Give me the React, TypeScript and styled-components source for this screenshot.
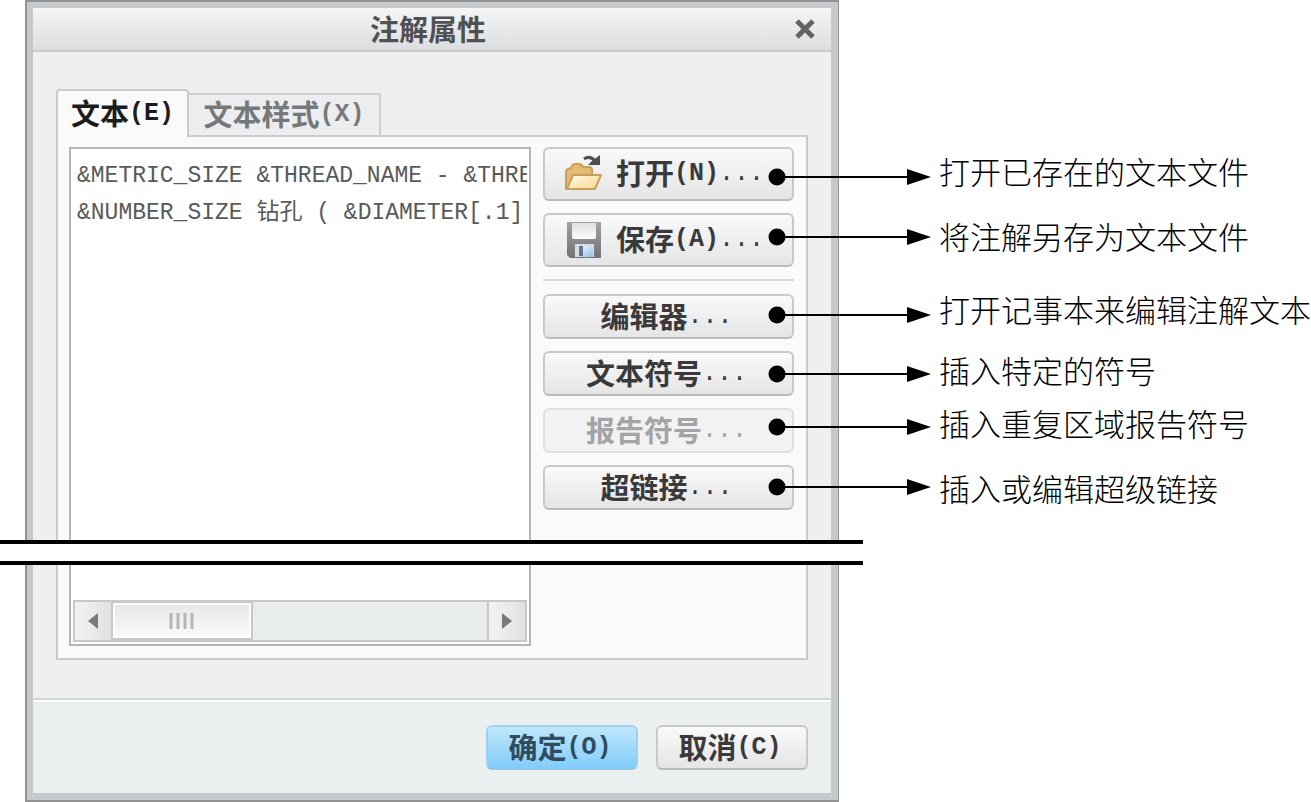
import React from 'react';
import styled, { createGlobalStyle, css } from 'styled-components';

const GlobalStyle = createGlobalStyle`
  * { box-sizing: border-box; }
  body {
    margin: 0;
    background: #fff;
    color: #3a3a3c;
    font-family: 'Noto Sans CJK SC', sans-serif;
  }
  button, textarea { font-family: inherit; color: inherit; margin: 0; }
`;

const Figure = styled.main`
  position: relative;
  display: grid;
  grid-template-columns: minmax(600px, 1fr) 472px;
  min-height: 100vh;
  padding-left: 25px;
  overflow: hidden;
`;

const Dialog = styled.section`
  display: flex;
  flex-direction: column;
  border: 2px solid #909294;
  border-right-width: 1px;
  background: #c5c9cb;
  padding: 6px 7px 7px 6px;
`;

const TitleBar = styled.header`
  display: grid;
  grid-template-columns: 36px 1fr 44px;
  align-items: center;
  height: 44px;
  border-bottom: 2px solid #c9cacb;
  background: linear-gradient(#f5f5f5, #dcdddf);
`;

const Title = styled.h1`
  grid-column: 2;
  margin: 0;
  padding-bottom: 2px;
  text-align: center;
  font-size: 29px;
  line-height: 40px;
  font-weight: 700;
  color: #505153;
`;

const CloseButton = styled.button`
  display: grid;
  place-items: center;
  width: 36px;
  height: 36px;
  padding: 0;
  border: 0;
  background: none;
`;

const Body = styled.div`
  flex: 1;
  display: flex;
  flex-direction: column;
  padding: 37px 23px 38px;
  background: #edeff1;
`;

const TabList = styled.div`
  display: flex;
  align-items: flex-end;
  height: 46px;
`;

const Tab = styled.button<{ $active?: boolean }>`
  display: flex;
  align-items: center;
  justify-content: center;
  padding: 0;
  font-size: 29px;
  font-weight: 700;
  line-height: 40px;
  white-space: nowrap;
  ${({ $active }) =>
    $active
      ? css`
          z-index: 1;
          width: 133px;
          height: 48px;
          margin-bottom: -2px;
          border: 2px solid #c9cbcd;
          border-bottom: 0;
          border-radius: 4px 4px 0 0;
          background: #fafafa;
          color: #1c1c1e;
        `
      : css`
          width: 192px;
          height: 42px;
          border: 2px solid #cdcfd1;
          border-left: 0;
          border-bottom: 0;
          background: #ebedef;
          color: #77787a;
        `}
`;

const Latin = styled.span`
  padding-top: 4px;
  font-family: 'Liberation Mono', monospace;
  font-size: 25px;
  line-height: 30px;
`;

const Dots = styled(Latin)`
  font-weight: 400;
`;

const ButtonLabel = styled.span`
  display: inline-flex;
  align-items: center;
  padding-bottom: 4px;
`;

const TabPanel = styled.div`
  flex: 1;
  display: grid;
  grid-template-columns: minmax(0, 1fr) 251px;
  gap: 12px;
  padding: 10px 12px 12px 11px;
  border: 2px solid #c9cbcd;
  background: #fafafa;
`;

const TextFrame = styled.div`
  display: flex;
  flex-direction: column;
  padding: 2px;
  border: 2px solid #b4b5b7;
  background: #fff;
`;

const NoteText = styled.textarea`
  flex: 1;
  display: block;
  width: 100%;
  padding: 7px 0 0 4px;
  border: 0;
  outline: 0;
  resize: none;
  overflow: hidden;
  white-space: pre;
  background: #fff;
  color: #58595b;
  font-family: 'Liberation Mono', 'Noto Sans CJK SC', monospace;
  font-size: 23px;
  line-height: 37px;
`;

const ScrollBar = styled.div`
  display: grid;
  grid-template-columns: 36px 1fr 36px;
  height: 42px;
  border: 2px solid #c6c8c9;
  background: #e9edee;
`;

const ScrollArrow = styled.button`
  display: grid;
  place-items: center;
  padding: 0;
  border: 0;
  background: linear-gradient(90deg, #f3f3f4, #e0e1e3);
`;

const ScrollTrack = styled.div`
  border: solid #c6c8c9;
  border-width: 0 2px;
`;

const ScrollThumb = styled.div`
  display: grid;
  place-items: center;
  width: 140px;
  height: 100%;
  border: 2px solid #c6c8c9;
  border-top-width: 1px;
  border-left: 0;
  background: linear-gradient(#e6e6e7, #fbfbfb);
  box-shadow: inset 0 0 0 2px #fff;
`;

const Actions = styled.div`
  display: flex;
  flex-direction: column;
  gap: 12px;
`;

const Divider = styled.hr`
  width: 100%;
  height: 2px;
  margin: 0 0 1px;
  border: 0;
  background: #d8d9da;
`;

const PushButton = styled.button<{ $withIcon?: boolean; $primary?: boolean }>`
  display: flex;
  align-items: center;
  justify-content: ${({ $withIcon }) => ($withIcon ? 'flex-start' : 'center')};
  gap: 14px;
  height: ${({ $withIcon }) => ($withIcon ? 54 : 45)}px;
  padding: ${({ $withIcon }) => ($withIcon ? '0 0 0 19px' : '0 4px 0 0')};
  border: 2px solid #c8c9ca;
  border-bottom-color: #b9babb;
  border-radius: 6px;
  background: linear-gradient(#f9f9f9, #e5e5e6);
  font-size: 29px;
  line-height: 40px;
  font-weight: 700;
  white-space: nowrap;

  &:disabled {
    color: #a3a4a6;
    border-color: #dfe0e1;
    background: #f2f2f3;
  }

  ${({ $primary }) =>
    $primary &&
    css`
      border-color: #a4d3ee #9fd0ee #8fc6e8;
      background: linear-gradient(#c0e6fc, #82cdfb);
      color: #2f4c60;
    `}
`;

const Footer = styled.footer`
  display: flex;
  justify-content: flex-end;
  gap: 18px;
  padding: 25px 23px 23px;
  border-top: 2px solid #d3d6d7;
  background: #ebeff0;
  box-shadow: inset 0 2px #fafbfb;

  ${PushButton} { width: 152px; }
`;

const BreakBand = styled.div`
  position: absolute;
  z-index: 2;
  top: 540px;
  left: 0;
  right: 448px;
  height: 25px;
  border: solid #000;
  border-width: 4px 0;
  background: #fff;
`;

const CalloutArrow = styled.svg<{ $y: number }>`
  position: absolute;
  z-index: 2;
  top: ${({ $y }) => $y - 9}px;
  left: calc(100% - 543px);
`;

const CalloutLabel = styled.span<{ $y: number }>`
  position: absolute;
  top: ${({ $y }) => $y - 22}px;
  left: calc(100% - 372px);
  color: #000;
  font-weight: 300;
  font-size: 31px;
  line-height: 40px;
  white-space: nowrap;
`;

const FolderIcon = () => (
  <svg width="38" height="38" viewBox="0 0 38 38" aria-hidden="true">
    <defs>
      <linearGradient id="folderFront" x1="0" y1="0" x2="1" y2="1">
        <stop offset="0" stopColor="#fffbe8" />
        <stop offset="1" stopColor="#f9d68c" />
      </linearGradient>
    </defs>
    <path d="M2 34V17q0-2 2-3l3-1q1-4 4-4h4q3 0 4 3h6q3 0 3 3v5L28 34Z" fill="#e3bb72" stroke="#c9a05a" strokeWidth="2" strokeLinejoin="round" />
    <path d="M9 20h28l-6 14H3Z" fill="url(#folderFront)" stroke="#c9a05a" strokeWidth="2" strokeLinejoin="round" />
    <path d="M20 4q6-4 11 2" fill="none" stroke="#4b4d50" strokeWidth="3" />
    <path d="M36 0v10H24l4-4Z" fill="#4b4d50" />
  </svg>
);

const DiskIcon = () => (
  <svg width="38" height="38" viewBox="0 0 38 38" aria-hidden="true">
    <defs>
      <linearGradient id="diskCase" x1="0" y1="0" x2="0" y2="1">
        <stop offset="0" stopColor="#a0a2a4" />
        <stop offset="1" stopColor="#707275" />
      </linearGradient>
      <linearGradient id="diskLabel" x1="0" y1="0" x2="0" y2="1">
        <stop offset="0" stopColor="#dedfe0" />
        <stop offset="1" stopColor="#fdfdfd" />
      </linearGradient>
      <linearGradient id="diskShutter" x1="0" y1="0" x2="1" y2="1">
        <stop offset="0" stopColor="#f4f8fb" />
        <stop offset="1" stopColor="#8fbfe0" />
      </linearGradient>
    </defs>
    <path d="M3 1h34v36H6l-3-3Z" fill="url(#diskCase)" />
    <path d="M8 2h24v14q0 2-2 2H10q-2 0-2-2Z" fill="url(#diskLabel)" />
    <path d="M11 23h19v13H11Z" fill="#d9dcde" />
    <path d="M15 25h14v11H15Z" fill="url(#diskShutter)" />
    <path d="M15 25h4v10h-4Z" fill="#5d7890" />
  </svg>
);

const actions = [
  { text: '编辑器' },
  { text: '文本符号' },
  { text: '报告符号', disabled: true },
  { text: '超链接' },
];

const callouts = [
  { arrowY: 177, labelY: 173, text: '打开已存在的文本文件' },
  { arrowY: 237, labelY: 238, text: '将注解另存为文本文件' },
  { arrowY: 315, labelY: 311, text: '打开记事本来编辑注解文本' },
  { arrowY: 374, labelY: 372, text: '插入特定的符号' },
  { arrowY: 427, labelY: 425, text: '插入重复区域报告符号' },
  { arrowY: 487, labelY: 490, text: '插入或编辑超级链接' },
];

const noteText =
  '&METRIC_SIZE &THREAD_NAME - &THRE\n&NUMBER_SIZE 钻孔 ( &DIAMETER[.1]';

export default function App() {
  return (
    <>
      <GlobalStyle />
      <Figure>
        <Dialog role="dialog" aria-labelledby="dialog-title">
          <TitleBar>
            <Title id="dialog-title">注解属性</Title>
            <CloseButton type="button" aria-label="关闭">
              <svg width="20" height="20" viewBox="0 0 20 20" aria-hidden="true">
                <path d="M2 2L18 18M18 2L2 18" stroke="#626365" strokeWidth="5" />
              </svg>
            </CloseButton>
          </TitleBar>
          <Body>
            <TabList role="tablist">
              <Tab type="button" role="tab" aria-selected="true" $active>
                <ButtonLabel>文本<Latin>(E)</Latin></ButtonLabel>
              </Tab>
              <Tab type="button" role="tab" aria-selected="false">
                <ButtonLabel>文本样式<Latin>(X)</Latin></ButtonLabel>
              </Tab>
            </TabList>
            <TabPanel role="tabpanel">
              <TextFrame>
                <NoteText aria-label="注解文本" wrap="off" spellCheck={false} defaultValue={noteText} />
                <ScrollBar>
                  <ScrollArrow type="button" aria-label="向左滚动">
                    <svg width="12" height="18" viewBox="0 0 12 18" aria-hidden="true">
                      <path d="M11 1v16L1 9Z" fill="#77797b" />
                    </svg>
                  </ScrollArrow>
                  <ScrollTrack>
                    <ScrollThumb>
                      <svg width="26" height="16" viewBox="0 0 26 16" aria-hidden="true">
                        <path d="M2 0v16M9 0v16M16 0v16M23 0v16" stroke="#b4b5b7" strokeWidth="3" />
                      </svg>
                    </ScrollThumb>
                  </ScrollTrack>
                  <ScrollArrow type="button" aria-label="向右滚动">
                    <svg width="12" height="18" viewBox="0 0 12 18" aria-hidden="true">
                      <path d="M1 1v16L11 9Z" fill="#77797b" />
                    </svg>
                  </ScrollArrow>
                </ScrollBar>
              </TextFrame>
              <Actions>
                <PushButton type="button" $withIcon>
                  <FolderIcon />
                  <ButtonLabel>打开<Latin>(N)</Latin><Dots>...</Dots></ButtonLabel>
                </PushButton>
                <PushButton type="button" $withIcon>
                  <DiskIcon />
                  <ButtonLabel>保存<Latin>(A)</Latin><Dots>...</Dots></ButtonLabel>
                </PushButton>
                <Divider />
                {actions.map(({ text, disabled }) => (
                  <PushButton key={text} type="button" disabled={disabled}>
                    <ButtonLabel>{text}<Dots>...</Dots></ButtonLabel>
                  </PushButton>
                ))}
              </Actions>
            </TabPanel>
          </Body>
          <Footer>
            <PushButton type="button" $primary>
              <ButtonLabel>确定<Latin>(O)</Latin></ButtonLabel>
            </PushButton>
            <PushButton type="button">
              <ButtonLabel>取消<Latin>(C)</Latin></ButtonLabel>
            </PushButton>
          </Footer>
        </Dialog>
        <BreakBand />
        {callouts.map(({ arrowY, labelY, text }) => (
          <React.Fragment key={text}>
            <CalloutArrow $y={arrowY} width="164" height="18" viewBox="0 0 164 18" aria-hidden="true">
              <circle cx="9" cy="9" r="8.5" />
              <path d="M9 8H139V1L163 9L139 17V10H9Z" />
            </CalloutArrow>
            <CalloutLabel $y={labelY}>{text}</CalloutLabel>
          </React.Fragment>
        ))}
      </Figure>
    </>
  );
}
